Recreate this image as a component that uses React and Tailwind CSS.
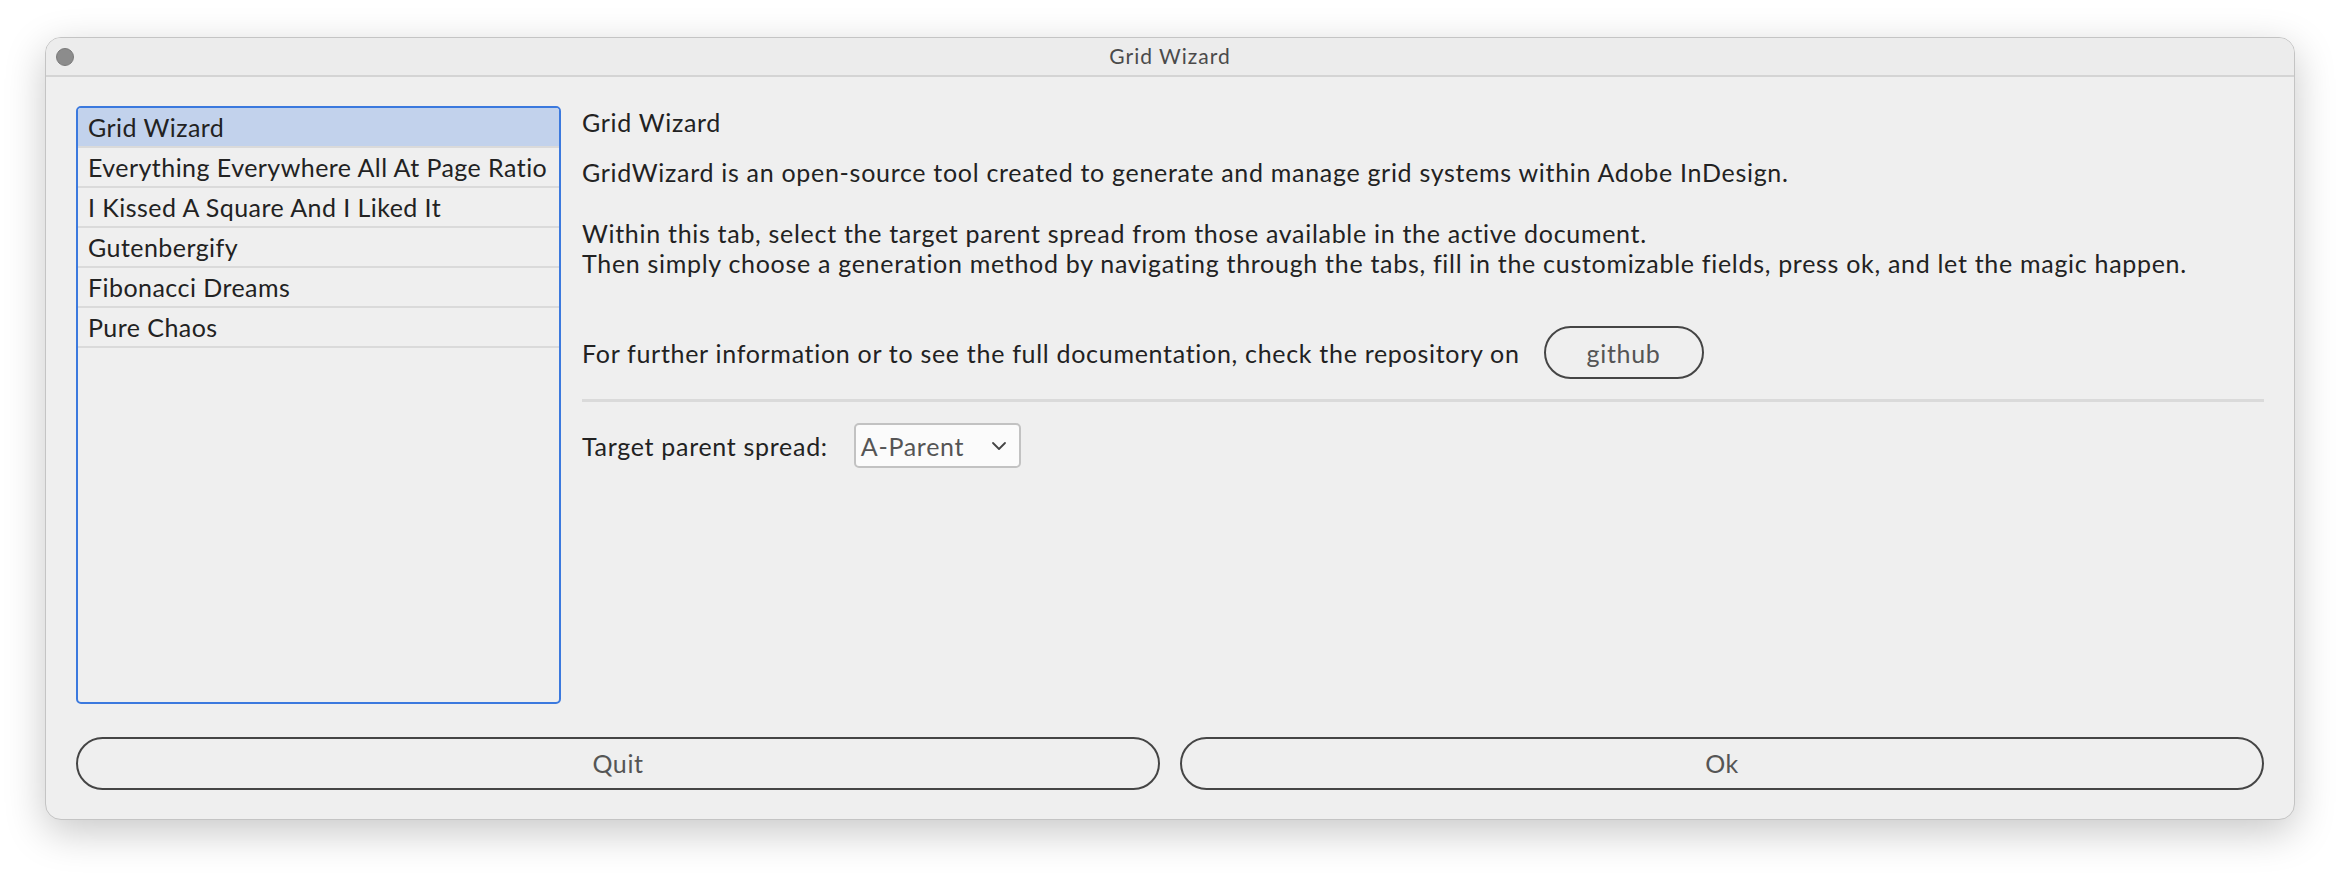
import { ChevronDown } from "lucide-react";

const tabs = [
  "Grid Wizard",
  "Everything Everywhere All At Page Ratio",
  "I Kissed A Square And I Liked It",
  "Gutenbergify",
  "Fibonacci Dreams",
  "Pure Chaos",
];

const font = { fontFamily: "Lato, 'Open Sans', sans-serif" };

const App = () => {
  return (
    <div
      className="w-[2340px] h-[874px] bg-white pl-[45px] pt-[37px] text-[#222]"
      style={font}
    >
      <section className="w-[2250px] h-[783px] rounded-[16px] border border-[#c4c4c4] bg-[#efefef] shadow-[0_12px_40px_rgba(0,0,0,0.22)] flex flex-col overflow-hidden">
        {/* title bar */}
        <header className="h-[39px] shrink-0 border-b-2 border-[#d4d4d4] bg-[#ececec] grid grid-cols-[1fr_auto_1fr] items-center px-[10px]">
          <span className="w-[18px] h-[18px] rounded-full bg-[#8c8c8c] border border-[#7a7a7a]" />
          <h1 className="text-[21px] tracking-[1px] text-[#4a4a4a] pb-[2px]">Grid Wizard</h1>
          <span />
        </header>

        <main className="flex-1 flex flex-col px-[30px] pt-[29px]">
          <div className="flex">
            <ul className="w-[485px] h-[598px] shrink-0 rounded-[5px] border-2 border-[#3b79de] overflow-hidden">
              {tabs.map((t, i) => (
                <li
                  key={t}
                  className={
                    "h-[40px] flex items-center pl-[10px] pt-[2px] text-[25px] tracking-[0.45px] border-b-2 border-[#dadada] " +
                    (i === 0 ? "bg-[#c2d2ec]" : "")
                  }
                >
                  {t}
                </li>
              ))}
            </ul>

            <div className="flex-1 ml-[21px] flex flex-col text-[25px] tracking-[0.7px] leading-[30px]">
              <h2 className="mt-[1px]">Grid Wizard</h2>
              <p className="mt-[20px]">
                GridWizard is an open-source tool created to generate and manage grid systems within Adobe InDesign.
              </p>
              <p className="mt-[31px]">
                Within this tab, select the target parent spread from those available in the active document.
                <br />
                Then simply choose a generation method by navigating through the tabs, fill in the customizable fields, press ok, and let the magic happen.
              </p>
              <div className="mt-[48px] flex items-center">
                <span>For further information or to see the full documentation, check the repository on</span>
                <button className="ml-[24px] w-[160px] h-[53px] rounded-full border-2 border-[#454545] text-[#555]">
                  github
                </button>
              </div>
              <div className="mt-[20px] h-[3px] bg-[#dadada]" />
              <div className="mt-[21px] flex items-center">
                <span>Target parent spread:</span>
                <div className="ml-[26px] w-[167px] h-[45px] rounded-[5px] border-2 border-[#c2c2c2] bg-[#fbfbfb] flex items-center justify-between pl-[5px] pr-[8px] text-[#555]">
                  <span>A-Parent</span>
                  <ChevronDown size={24} strokeWidth={1.8} color="#444" />
                </div>
              </div>
            </div>
          </div>

          <div className="mt-[33px] flex gap-[20px]">
            <button className="flex-1 h-[53px] rounded-full border-2 border-[#454545] text-[25px] tracking-[0.6px] text-[#555]">
              Quit
            </button>
            <button className="flex-1 h-[53px] rounded-full border-2 border-[#454545] text-[25px] tracking-[0.6px] text-[#555]">
              Ok
            </button>
          </div>
        </main>
      </section>
    </div>
  );
};

export default App;
